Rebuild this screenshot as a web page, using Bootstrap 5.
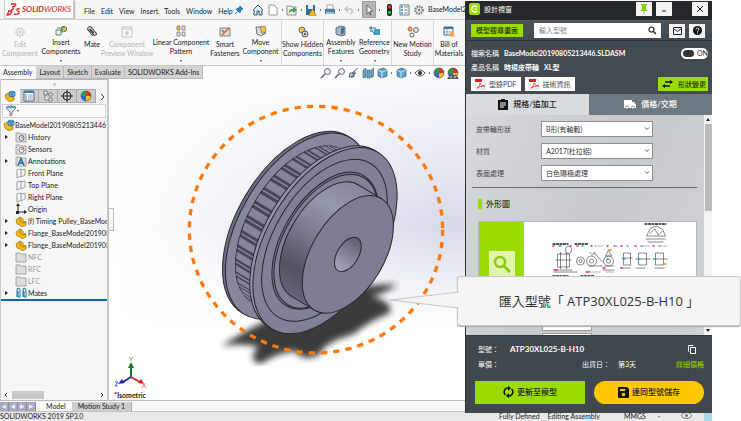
<!DOCTYPE html>
<html lang="zh-Hant">
<head>
<meta charset="utf-8">
<meta name="viewport" content="width=device-width, initial-scale=1">
<title>SOLIDWORKS</title>
<link href="https://cdn.jsdelivr.net/npm/bootstrap@5.3.0/dist/css/bootstrap.min.css" rel="stylesheet">
<style>
body{font-family:Lato,"Noto Sans CJK TC",sans-serif;font-size:7px;line-height:9px;color:#222;background:#fff}
button{font:inherit;color:inherit;background:none;border:0;padding:0}
svg{display:block;flex:none}
.ic{width:12px;height:12px}
.mid{display:grid;place-items:center}
.desk{min-height:100vh;padding-right:29px}
.cad{min-height:100vh;background:#f4f4f4}
.titles{height:20px;border-bottom:1px solid #cfcfcf;background:#f5f5f5}
.brand{width:70px;height:19px;margin-left:4px;background:#fbfbfb;border:1px solid #ccc;border-top:0;box-shadow:1px 1px 1px #bbb}
.brand b{color:#d4282a;font-style:italic;font-size:8px;line-height:18px}
.brand b i{font-weight:400}
.menus{gap:6px;margin-left:10px;padding-top:4px;width:145px}
.quick{gap:3px}
.quick button.on{background:#b5b5b5;border:1px solid #999;height:17px;width:14px}
.ribbon{height:46px;border-bottom:1px solid #c6c6c6;background:#f8f8f8;overflow:hidden}
.ribbon button{flex:none;display:flex;flex-direction:column;align-items:center;padding-top:5px;white-space:nowrap}
.ribbon button .ic{margin-bottom:1px}
.ribbon button.two{padding-top:6px}
.ribbon button.two .ic{margin-bottom:2px}
.ribbon .rule{border-right:1px solid #d8d8d8}
.ribbon .off{color:#b4b4b4}
.ribbon .off .ic{opacity:.35}
.caret{width:0;height:0;border:1px solid transparent;border-top:2px solid #444;margin-top:4px}
.dot{width:1px;height:2px;background:#777}
.views .dot{margin:0 1px}
.w20{width:20px}.w30{width:30px}.w34{width:34px}.w40{width:40px}.w42{width:42px}.w50{width:50px}.w58{width:58px}
.cmd button{height:13px;padding:0 3px;background:#d3d3d3;border:1px solid #b8b8b8;border-width:0 1px 1px 0}
.cmd button.on{background:#f8f8f8;border-color:transparent}
.work{background:linear-gradient(90deg,#fff 16%,rgba(255,255,255,0) 62%),linear-gradient(#fdfdff 0%,#eceef6 22%,#d8dbe8 48%,#edeff6 64%,#fff 78%)}
.tree{width:109px;background:#f6f6f6;border:1px solid #c9c9c9;border-width:0 2px 0 1px;overflow:hidden}
.grip{height:10px;border-top:1px solid #b5b5b5}
.grip i{width:3px;height:3px;border:1px solid #aaa;border-radius:50%}
.ftabs button{width:19px;height:14px;background:#ccc;border:1px solid #aaa;border-width:1px 1px 1px 0}
.ftabs button.on{background:#f8f8f8;border-color:transparent}
.filter{height:14px;margin:1px;border:1px solid #d2d2d2;background:#fafafa;padding-left:2px}
.tree li{height:12px;gap:1px;white-space:nowrap}
.tree .top-node{gap:0;padding-left:2px}
.tree .nodes li{padding-left:4px}
.tree .arr{width:9px;flex:none}
.arr.more::before{content:"";display:block;width:0;border:2px solid transparent;border-left:3px solid #222}
.tree .none{color:#999}
.rollbar{border-top:2px solid #1461b3}
.hs{height:11px;padding:0 3px}
.hs i{width:32px;height:8px;background:#cacaca;margin-left:4px}
.pull{left:108px;top:142px;width:6px;height:23px;border:1px solid #bbb;background:#f8f8f8}
.views{height:13px;left:320px;gap:2px}
.model{width:270px;margin-left:71px;margin-top:17px}
.triad{left:5px;bottom:0}
.foot{border-top:1px solid #bbb;height:11px;background:#f7f7f7}
.foot .step{width:9px;height:9px;background:#a8a9c2;border-right:1px solid #8888a4;color:#eee;font-size:5px}
.foot button{padding:0 6px}
.foot .alt{background:#cfcfcf;border-right:1px solid #aaa}
.status{height:10px;background:#e9e9e9;border-top:1px solid #c2c2c2;white-space:nowrap}
.status .right{width:213px}
.tail{width:8px;background:#a8dbe6}
.win{right:29px;top:1px;bottom:8px;width:247px;background:#434a50;color:#fff;border-left:1px solid #2b2f33}
.win .cap{height:21px;background:#25292c;border-bottom:1px solid #555b60;padding:0 4px 2px 3px;gap:4px}
.cap button,.sq{background:#f4f4f4;color:#222;width:16px;height:14px}
.search{height:22px;padding:0 7px 0 5px;background:linear-gradient(#4b5258,#434a50);border-bottom:1px solid #2f3438}
.lime{background:#9bdc00;color:#26330a;font-weight:500}
.search .lime{width:52px;height:13px}
.find{height:15px;background:#fff;margin:0 8px 0 11px}
.find input{font-size:7px;line-height:9px;border:0;padding:0 5px;min-width:0;background:none;color:#333;outline:0}
.find input::placeholder{color:#888}
.info{padding:5px 4px 3px 5px}
.info .line{height:14px;gap:5px;white-space:nowrap}
.info .chips{margin-top:3px}
.tog{flex:none;width:27px;height:11px;border-radius:6px;background:#fff;color:#333}
.tog input{appearance:none;flex:none;margin:0 3px 0 2px;width:11px;height:7px;border-radius:4px;background:#333}
.chip{height:14px;background:#fff;color:#444;padding:0 4px 0 3px;gap:3px}
.chip.lime{background:#9bdc00;color:#26330a;gap:5px;padding:0 2px 0 4px}
.tabs2 button{height:21px;font-size:8px;gap:5px;font-weight:500}
.tabs2 .on{background:#d9dcde;color:#222}
.tabs2 .no{background:#6d7881;color:#fff}
.form2{background:linear-gradient(115deg,#d6d9db,#c6cacd 50%,#d0d3d5);color:#444;overflow:hidden;min-height:0}
.form2 .in{padding:6px 7px 0 6px}
.frow{height:22px;align-items:flex-start;padding-left:4px}
.frow label{width:65px;line-height:16px}
.frow select{width:112px;height:16px;border:1px solid #8b8f92;background:#fff;font-size:7px;line-height:9px;color:#333;appearance:none;padding:0 4px;border-radius:0}
.pick{position:relative}
.pick svg{position:absolute;right:3px;top:6px;pointer-events:none}
.sect{border-top:1px solid #666b6f;padding:11px 0 0 6px}
.sect h2{font-size:8px;line-height:10px;font-weight:500;margin:0 0 12px;padding-left:4px;border-left:4px solid #9bdc00;color:#333}
.shot{height:86px;background:#fff;border:1px solid #b5b8ba}
.shot .side{width:45px;background:#9bdc00}
.shot .lens{width:26px;height:26px;background:#e2f5b0}
.boxes{margin:8px 0 0 64px;width:50px}
.boxes input{display:block;width:100%;height:16px;margin-bottom:2px;border:1px solid #999;background:#fff}
.sb{width:8px;background:#f2f2f2;color:#222;padding:3px 0}
.sb i{background:#b9bbbd;width:7px;height:87px;margin-top:3px}
.base{height:78px;padding:6px 8px 9px 12px;border-top:1px solid #33383c;background:#41484d}
.base .line{height:15px;white-space:nowrap}
.base .k{width:32px}
.base .code{font-size:8px}
.base .day{margin-right:40px}
.base a{color:#9bdc00;text-decoration:none}
.base .acts{margin:9px 0 0 -3px;gap:9px}
.acts button{height:23px;font-size:8px;color:#222;font-weight:500;gap:3px}
.acts .save{background:#ffc800;border-radius:12px}
.tip{right:0;top:276px;width:284px;height:50px;background:#f5f5f5;border:1px solid #c6c6c6;border-radius:3px;font-family:"Open Sans","Noto Sans CJK TC",sans-serif;font-size:13px;line-height:18px;color:#333;box-shadow:0 1px 1px #aaa}
.tip svg{position:absolute;right:100%;top:14px;margin-right:-1px}
</style>
<script src="https://cdn.jsdelivr.net/npm/bootstrap@5.3.0/dist/js/bootstrap.bundle.min.js"></script>
</head>
<body>
<svg width="0" height="0" class="position-absolute" aria-hidden="true">
<symbol id="part" viewBox="0 0 12 12"><path d="M1 5l4-3 3 2v2l3 1v3l-4 2-2-2-3-1z" fill="#f2b90f" stroke="#8a6200" stroke-width=".6"/><path d="M5 2v4l3 2 3-1" fill="none" stroke="#8a6200" stroke-width=".6"/></symbol>
<symbol id="asm" viewBox="0 0 12 12"><path d="M1 5l3-2 3 3 3 1v3l-4 2-4-3z" fill="#f2b90f" stroke="#8a6200" stroke-width=".6"/><path d="M5 2l3-1 3 1v4L8 7 5 6z" fill="#5aa9d8" stroke="#205a80" stroke-width=".6"/><path d="M5 2l3 1 3-1M8 3v4" fill="none" stroke="#205a80" stroke-width=".5"/></symbol>
<symbol id="fold" viewBox="0 0 12 12"><path d="M1 2h4l1 1h5v8H1z" fill="#ddd" stroke="#888" stroke-width=".7"/></symbol>
<symbol id="ball" viewBox="0 0 12 12"><circle cx="6" cy="6" r="5" fill="#2c65cc"/><path d="M6 6V1a5 5 0 00-5 5z" fill="#2ca13a"/><path d="M6 6V1a5 5 0 015 5z" fill="#e6322b"/><path d="M6 6h5a5 5 0 01-5 5z" fill="#f0c322"/><circle cx="6" cy="6" r="5" fill="none" stroke="#444" stroke-width=".5"/></symbol>
<symbol id="cube" viewBox="0 0 12 12"><path d="M2 3l5-2 4 2v6l-5 2-4-2z" fill="#5aa5c8" stroke="#356" stroke-width=".7"/><path d="M2 3l4 2 5-2M6 5v6" fill="none" stroke="#e8f6fc" stroke-width=".8"/></symbol>
<symbol id="lens" viewBox="0 0 12 12"><circle cx="7.500" cy="4.500" r="3" fill="#e5f2f8" stroke="#667" stroke-width="1"/><path d="M5 7l-4 4" stroke="#667" stroke-width="1.600"/></symbol>
<symbol id="plane" viewBox="0 0 12 12"><path d="M2 3l4-1v7l-4 2zM6 3l4-1v6l-4 2" fill="none" stroke="#888" stroke-width=".8"/></symbol>
<symbol id="gear" viewBox="0 0 12 12"><circle cx="6" cy="6" r="4" fill="none" stroke="#777" stroke-width="1.600" stroke-dasharray="1.600 1"/><circle cx="6" cy="6" r="3" fill="#eee" stroke="#777" stroke-width=".6"/><circle cx="6" cy="6" r="1.200" fill="#777"/></symbol>
<symbol id="pdf" viewBox="0 0 12 12"><path d="M2 1h7l2 2v8H2z" fill="#fff" stroke="#bbb" stroke-width=".6"/><path d="M1 1h7v3H1z" fill="#dc2020"/><path d="M3 10c2-1 3-3 3-5 1 2 2 3 5 3-4 0-6 1-8 2z" fill="none" stroke="#dc2020" stroke-width=".8"/></symbol>
</svg>

<div class="desk position-relative">
<main class="cad d-flex flex-column">
<header class="titles d-flex align-items-center overflow-hidden">
  <div class="brand d-flex align-items-center flex-shrink-0">
    <svg width="17" height="16" viewBox="0 0 17 16" fill="none" stroke="#d4282a" stroke-width="1.300"><path d="M6 3h4c2 0 0 3-3 3 3 0 1 3-1 3M3 10h3c2 0 0 4-4 4l2-4M15 8c-3-1-4 1-2 2 3 2 0 4-4 3"/></svg>
    <b>SOLID<i>WORKS</i></b>
  </div>
  <nav class="menus d-flex flex-shrink-0"><button>File</button><button>Edit</button><button>View</button><button>Insert</button><button>Tools</button><button>Window</button><button>Help</button></nav>
  <div class="quick d-flex align-items-center flex-shrink-0">
    <button class="ms-1" aria-label="Pin"><svg class="ic" viewBox="0 0 12 12"><path d="M7 2l3 3-2 1-1 3-4-4 3-1zM5 7l-3 3" fill="#2a84bb" stroke="#2a84bb"/></svg></button>
    <button aria-label="Home" class="ms-1"><svg class="ic" viewBox="0 0 12 12"><path d="M1 6l5-5 5 5M2 6v5h3V7h2v4h3V6" fill="#dfe8ee" stroke="#345468"/></svg></button>
    <button aria-label="New"><svg class="ic" viewBox="0 0 12 12"><path d="M2 1h5l3 3v7H2z" fill="#fff" stroke="#999"/></svg></button><i class="dot"></i>
    <button aria-label="Open"><svg class="ic" viewBox="0 0 12 12"><path d="M1 2h4l1 1h4v8H1z" fill="#eee" stroke="#666" stroke-width=".7"/><path d="M3 9c0-4 2-4 4-4V3l4 3-4 3V7C5 7 4 8 3 9" fill="#39a848"/></svg></button><i class="dot"></i>
    <button aria-label="Save"><svg class="ic" viewBox="0 0 12 12"><path d="M1 1h9v10H1z" fill="#2f6f9d"/><path d="M3 1h5v4H3z" fill="#e5eef4"/><path d="M7.500 5l4 6.500h-8z" fill="#f6b914" stroke="#8a6200" stroke-width=".4"/></svg></button><i class="dot"></i>
    <button aria-label="Print"><svg class="ic" viewBox="0 0 12 12"><path d="M3 1h6v4H3z" fill="#fff" stroke="#888" stroke-width=".7"/><path d="M1 5h10v5H1z" fill="#4a84a7"/><path d="M2 9h8" stroke="#fff"/></svg></button><i class="dot"></i>
    <button aria-label="Undo"><svg class="ic" viewBox="0 0 12 12"><path d="M5 2L2 5l3 3M2 5h5c3 0 3 4 0 5" fill="none" stroke="#c5c5c5" stroke-width="1.500"/></svg></button><i class="dot"></i>
    <button class="on" aria-label="Select"><svg class="ic" viewBox="0 0 12 12"><path d="M4 1v9l2-2 1 3h1L7 7h3z" fill="#eee" stroke="#444" stroke-width=".7"/></svg></button><i class="dot"></i>
    <button aria-label="Rebuild"><svg class="ic" viewBox="0 0 12 12"><rect x="4" y="0" width="5" height="12" rx="2" fill="#222"/><circle cx="6.500" cy="3" r="1.700" fill="#e33"/><circle cx="6.500" cy="8.500" r="1.700" fill="#2b4"/></svg></button>
    <button aria-label="Properties"><svg class="ic" viewBox="0 0 12 12"><path d="M2 1h9v10H2z" fill="#fff" stroke="#678"/><path d="M3 3h2M3 6h2M3 9h2" stroke="#2a84bb" stroke-width="1.500"/><path d="M6 3h4M6 6h4M6 9h4" stroke="#888"/></svg></button>
    <button aria-label="Options"><svg class="ic"><use href="#gear"/></svg></button>
    <span>BaseModel2</span>
  </div>
</header>

<div class="ribbon d-flex">
  <button class="two off w40" disabled><svg class="ic"><use href="#gear"/></svg>Edit<span>Component</span></button>
  <button class="w42"><svg class="ic" viewBox="0 0 12 12"><path d="M1 5h5v5H1zM2 3h5v5" fill="#e9f2e8" stroke="#3a7a3a" stroke-width=".8"/><circle cx="9" cy="4" r="3" fill="#2f74b8"/><path d="M7 3l4-1v3l-3 2z" fill="#f2b90f"/></svg>Insert<span>Components</span><i class="caret"></i></button>
  <button class="two w20"><svg class="ic" viewBox="0 0 12 12"><path d="M3 3l5 6c2 1 3-1 2-2L5 1C3 0 1 2 2 4l5 6M4 3l4 4" fill="none" stroke="#444" stroke-width="1.100"/></svg>Mate</button>
  <button class="two off w50" disabled><svg class="ic" viewBox="0 0 12 12"><path d="M1 1h10v10H1zM1 3h10" fill="none" stroke="#666"/><circle cx="6" cy="7" r="2" fill="#888"/></svg>Component<span>Preview Window</span></button>
  <button class="w58"><svg class="ic" viewBox="0 0 12 12"><path d="M2 1h3v4H2z" fill="#f2b90f" stroke="#765" stroke-width=".6"/><path d="M7 1h3v4H7zM2 7h3v4H2zM7 7h3v4H7z" fill="#e8e8e8" stroke="#667" stroke-width=".7"/></svg>Linear Component<span>Pattern</span><i class="caret"></i></button>
  <button class="two w30"><svg class="ic" viewBox="0 0 12 12"><path d="M1 2h10v8H1z" fill="#ddd" stroke="#666" stroke-width=".8"/><path d="M3 9l4-4M7 5l3-3M3 4l2 2" stroke="#c66a20" stroke-width="1.500"/></svg>Smart<span>Fasteners</span></button>
  <button class="w42 rule"><svg class="ic" viewBox="0 0 12 12"><path d="M1 2h6v5l4 1-5 3-4-2z" fill="#ddd" stroke="#555" stroke-width=".8"/><path d="M5 2l5-1 1 5-4 3z" fill="#f2c23b" stroke="#755" stroke-width=".6"/></svg>Move<span>Component</span><i class="caret"></i></button>
  <button class="two w42 rule"><svg class="ic" viewBox="0 0 12 12"><circle cx="5" cy="4" r="3" fill="#f2c23b" stroke="#555" stroke-width=".8"/><circle cx="8" cy="8" r="3" fill="#ddd" stroke="#444" stroke-width=".9"/><circle cx="8" cy="8" r="1" fill="#333"/></svg>Show Hidden<span>Components</span></button>
  <button class="w34"><svg class="ic" viewBox="0 0 12 12"><path d="M1 3l4-2 5 1v8l-4 1-5-2z" fill="#aab5bd" stroke="#445" stroke-width=".7"/><path d="M6 3l3-1v6l-3 2z" fill="#267fb0"/></svg>Assembly<span>Features</span><i class="caret"></i></button>
  <button class="w34 rule"><svg class="ic" viewBox="0 0 12 12"><path d="M5 4h6v6H5z" fill="#4a9ec4"/><path d="M2 1v6M0 3h7M3 5l3 5" stroke="#256d94"/></svg>Reference<span>Geometry</span><i class="caret"></i></button>
  <button class="two w42 rule"><svg class="ic" viewBox="0 0 12 12"><circle cx="3" cy="3" r="2" fill="#f6a26d" stroke="#b64"/><circle cx="9" cy="4" r="2.500" fill="#ddd" stroke="#777"/><circle cx="5" cy="9" r="2" fill="#eee" stroke="#666"/></svg>New Motion<span>Study</span></button>
  <button class="two w30"><svg class="ic" viewBox="0 0 12 12"><path d="M1 1h9v8H1z" fill="#fff" stroke="#37799f"/><path d="M1 2h9" stroke="#37799f" stroke-width="2"/><path d="M1 6h9M4 3v6" stroke="#789" stroke-width=".7"/><path d="M6 7l4-1 2 4-4 1z" fill="#f2a93b"/></svg>Bill of<span>Materials</span></button>
</div>

<div class="work flex-grow-1 d-flex flex-column position-relative">
  <nav class="cmd d-flex"><button class="on">Assembly</button><button>Layout</button><button>Sketch</button><button>Evaluate</button><button>SOLIDWORKS Add-Ins</button></nav>
  <div class="views position-absolute top-0 d-flex align-items-center">
    <svg class="ic"><use href="#lens"/></svg><svg class="ic"><use href="#lens"/></svg>
    <svg class="ic" viewBox="0 0 12 12"><path d="M10 1L4 6h4L3 10M2 6h4v4H1z" fill="#b9cdd8" stroke="#567" stroke-width="1"/></svg>
    <svg class="ic" viewBox="0 0 12 12"><path d="M1 3l3-2v9l-3 1zM5 3h3v8H5zM9 3l3-2v8l-3 2z" fill="#66a9c6" stroke="#356" stroke-width=".6"/></svg>
    <svg class="ic"><use href="#cube"/></svg><i class="dot"></i><svg class="ic"><use href="#cube"/></svg><i class="dot"></i>
    <svg class="ic" viewBox="0 0 12 12"><path d="M1 6c3-4 7-4 10 0-3 4-7 4-10 0z" fill="#eee" stroke="#555"/><circle cx="6" cy="6" r="2" fill="#333"/></svg><i class="dot"></i>
    <svg class="ic"><use href="#ball"/></svg><svg class="ic" viewBox="0 0 12 12"><use href="#ball"/><path d="M0 12l3-4h6l3 4z" fill="#555"/><path d="M3 10h2M7 10h2" stroke="#fff"/></svg>
  </div>
  <div class="d-flex flex-grow-1">
    <aside class="tree d-flex flex-column flex-shrink-0">
      <div class="grip mid"><i></i></div>
      <div class="ftabs d-flex">
        <button class="on mid" aria-label="Feature tree"><svg class="ic"><use href="#asm"/></svg></button>
        <button class="mid" aria-label="Properties"><svg class="ic" viewBox="0 0 12 12"><path d="M1 1h10v10H1z" fill="#fff" stroke="#567"/><path d="M1 2h10" stroke="#2a84bb" stroke-width="2"/><path d="M3 4v6" stroke="#2a84bb"/><path d="M5 5h5M5 7h5M5 9h5" stroke="#888" stroke-width=".8"/></svg></button>
        <button class="mid" aria-label="Configurations"><svg class="ic" viewBox="0 0 12 12"><path d="M2 1h3v4H2zM7 3h3v3H7zM7 8h3v3H7zM3 5v5h4M5 4h2" fill="#eee" stroke="#666" stroke-width=".8"/></svg></button>
        <button class="mid" aria-label="Dimensions"><svg class="ic" viewBox="0 0 12 12"><circle cx="6" cy="6" r="4" fill="none" stroke="#222"/><path d="M6 0v12M0 6h12" stroke="#222"/></svg></button>
        <button class="mid" aria-label="Appearances"><svg class="ic"><use href="#ball"/></svg></button>
        <svg class="ms-1 mt-1" width="6" height="8" viewBox="0 0 6 8"><path d="M1 1l3 3-3 3" fill="none" stroke="#444"/></svg>
      </div>
      <div class="filter d-flex align-items-center"><svg class="ic" viewBox="0 0 12 12"><ellipse cx="6" cy="2.500" rx="5" ry="1.500" fill="#4fa4cc" stroke="#567" stroke-width=".6"/><path d="M1 3l4 4v4l2-1V7l4-4" fill="#ddd" stroke="#667" stroke-width=".8"/></svg><i class="caret mt-0"></i></div>
      <ul class="list-unstyled m-0">
        <li class="top-node d-flex align-items-center"><svg class="ic"><use href="#asm"/></svg><span>BaseModel20190805213446&nbsp; (D</span></li>
      </ul>
      <ul class="nodes list-unstyled m-0">
        <li class="d-flex align-items-center"><span class="arr more"></span><svg class="ic" viewBox="0 0 12 12"><use href="#fold"/><circle cx="6.500" cy="7" r="2.500" fill="#fff" stroke="#357" stroke-width=".9"/><path d="M6.500 5.500V7H8" fill="none" stroke="#357" stroke-width=".7"/></svg>History</li>
        <li class="d-flex align-items-center"><span class="arr"></span><svg class="ic" viewBox="0 0 12 12"><use href="#fold"/><circle cx="6.500" cy="7" r="2.500" fill="#fff" stroke="#555" stroke-width=".7"/><path d="M6 7l3-2" stroke="#d22"/></svg>Sensors</li>
        <li class="d-flex align-items-center"><span class="arr more"></span><svg class="ic" viewBox="0 0 12 12"><use href="#fold"/><path d="M3 10.500l3-7 3 7M4 8h4" fill="none" stroke="#14679c" stroke-width="1.400"/></svg>Annotations</li>
        <li class="d-flex align-items-center"><span class="arr"></span><svg class="ic"><use href="#plane"/></svg>Front Plane</li>
        <li class="d-flex align-items-center"><span class="arr"></span><svg class="ic"><use href="#plane"/></svg>Top Plane</li>
        <li class="d-flex align-items-center"><span class="arr"></span><svg class="ic"><use href="#plane"/></svg>Right Plane</li>
        <li class="d-flex align-items-center"><span class="arr"></span><svg class="ic" viewBox="0 0 12 12"><path d="M3 2v7h7" fill="none" stroke="#222"/><path d="M3 0l2 3H1zM12 9L9 7v4zM1 8h3v3H1z" fill="#222"/></svg>Origin</li>
        <li class="d-flex align-items-center"><span class="arr more"></span><svg class="ic"><use href="#part"/></svg>(f) Timing Pulley_BaseMode</li>
        <li class="d-flex align-items-center"><span class="arr more"></span><svg class="ic"><use href="#part"/></svg>Flange_BaseModel201908</li>
        <li class="d-flex align-items-center"><span class="arr more"></span><svg class="ic"><use href="#part"/></svg>Flange_BaseModel201908</li>
        <li class="d-flex align-items-center none"><span class="arr"></span><svg class="ic"><use href="#fold"/></svg>NFC</li>
        <li class="d-flex align-items-center none"><span class="arr"></span><svg class="ic"><use href="#fold"/></svg>RFC</li>
        <li class="d-flex align-items-center none"><span class="arr"></span><svg class="ic"><use href="#fold"/></svg>LFC</li>
        <li class="d-flex align-items-center"><span class="arr more"></span><svg class="ic" viewBox="0 0 12 12"><path d="M2 10V4c0-4 3-3 3 0v5c0 2-2 1-2 0V4M8 10V4c0-4 3-3 3 0v5c0 2-2 1-2 0V4" fill="none" stroke="#2f85ab" stroke-width="1.200"/></svg>Mates</li>
      </ul>
      <div class="rollbar"></div>
      <div class="hs d-flex align-items-center mt-auto"><svg width="4" height="6" viewBox="0 0 4 6"><path d="M3 1L1 3l2 2" fill="none" stroke="#333"/></svg><i></i><svg class="ms-auto" width="4" height="6" viewBox="0 0 4 6"><path d="M1 1l2 2-2 2" fill="none" stroke="#333"/></svg></div>
    </aside>
    <section class="flex-grow-1 position-relative">
      <svg class="model" viewBox="0 0 810 810" role="img" aria-label="Timing pulley">
        <defs>
          <linearGradient id="hubg" gradientUnits="userSpaceOnUse" x1="0" y1="-195" x2="0" y2="195"><stop offset="0" stop-color="#85889d"/><stop offset=".25" stop-color="#9497b0"/><stop offset=".5" stop-color="#7a7c92"/><stop offset=".8" stop-color="#51535f"/><stop offset="1" stop-color="#64667a"/></linearGradient>
          <linearGradient id="boreg" x1="0" y1="0" x2="0" y2="1"><stop offset="0" stop-color="#5c5e6c"/><stop offset="1" stop-color="#a5a8c2"/></linearGradient>
          <filter id="soft" x="-20%" y="-20%" width="140%" height="140%"><feGaussianBlur stdDeviation="9"/></filter>
        </defs>
        <path d="M125 750Q280 650 420 610Q540 560 650 566Q620 590 575 600Q640 620 630 650Q560 680 520 715Q430 740 420 775Q370 800 345 765Q290 770 240 805Q200 790 235 752Q180 740 125 750z" fill="#1b1b1b" opacity=".86" filter="url(#soft)"/>
        <g stroke="#25272f" stroke-width="3">
          <g transform="translate(344 385) rotate(31)">
            <ellipse rx="171" ry="309" fill="#6c6e82"/>
            <ellipse cx="10" rx="171" ry="309" fill="#85889d"/>
            <path d="M10-266A147 266 0 0 0 10 266H100V-266z" fill="#474957"/>
            <g id="teeth" stroke-width="1"></g>
          </g>
          <g transform="translate(435 434) rotate(31)">
            <ellipse cx="-11" rx="171" ry="309" fill="#9194aa"/>
            <ellipse rx="171" ry="309" fill="#7f8297"/>
            <ellipse cx="-2" rx="149" ry="269" fill="#7f8297"/>
            <ellipse rx="126" ry="227" fill="#75778b"/>
            <ellipse cx="3" rx="123" ry="222" fill="#7f8297"/>
            <path d="M0-195A108 195 0 0 0 0 195H80V-195z" fill="url(#hubg)"/>
            <ellipse cx="80" rx="108" ry="195" fill="#7c7f93"/>
            <ellipse cx="80" rx="32" ry="57" fill="url(#boreg)"/>
          </g>
        </g>
        <ellipse cx="408" cy="401" rx="380" ry="370" fill="none" stroke="#ff7a0d" stroke-width="10" stroke-dasharray="19 18"/>
      </svg>
      <div class="triad position-absolute">
        <svg width="32" height="34" viewBox="0 0 32 34"><path d="M17 20V9" stroke="#1a7a1a" stroke-width="2"/><path d="M17 5l3 6h-6z" fill="#1a7a1a"/><path d="M17 20l9 5" stroke="#c22" stroke-width="2"/><path d="M30 27l-6-1 3-4z" fill="#c22"/><path d="M17 20l-8 5" stroke="#22b" stroke-width="2"/><path d="M4 27l4-5 3 4z" fill="#22b"/><path d="M15 0l2 2 2-2M17 2v2" fill="none" stroke="#5b5"/><path d="M28 26l4 5M32 26l-4 5" stroke="#e66"/><path d="M1 25h3l-3 4h3" fill="none" stroke="#55d"/></svg>
        <b>*Isometric</b>
      </div>
    </section>
  </div>
  <button class="pull position-absolute" aria-label="Collapse tree"></button>
</div>
<footer>
  <div class="foot d-flex align-items-center"><span class="step text-center">◀</span><span class="step text-center">◀</span><span class="step text-center">▶</span><span class="step text-center">▶</span><button class="bg-white ms-1">Model</button><button class="alt">Motion Study 1</button></div>
  <div class="status d-flex justify-content-between"><span>SOLIDWORKS 2019 SP3.0</span><div class="right d-flex gap-2"><span>Fully Defined</span><span>Editing Assembly</span><span class="ms-3">MMGS</span><span class="ms-1">·</span><svg class="ms-auto" width="11" height="8" viewBox="0 0 11 8"><ellipse cx="5.500" cy="3.500" rx="5" ry="3" fill="none" stroke="#777"/><circle cx="5.500" cy="3.500" r="1.500" fill="#777"/></svg><i class="tail ms-1"></i></div></div>
</footer>
</main>

<section class="win position-absolute d-flex flex-column">
  <div class="cap d-flex align-items-center">
    <svg width="11" height="12" viewBox="0 0 11 12"><rect width="11" height="12" rx="2" fill="#9bdc00"/><path d="M8 4a3 3 0 100 4" fill="none" stroke="#fff" stroke-width="1.500"/><path d="M5 6h3" stroke="#fff"/></svg>
    <span class="me-auto">設計視窗</span>
    <button class="mid" aria-label="固定"><svg width="8" height="10" viewBox="0 0 8 10"><path d="M1 0h6v1L6 2v3l2 2H0l2-2V2L1 1zM3.500 7h1v3h-1z" fill="#8ad000"/></svg></button>
    <button class="mid" aria-label="最小化"><svg width="6" height="8" viewBox="0 0 6 8"><path d="M1 6h4" stroke="#222"/></svg></button>
    <button aria-label="關閉" class="mid ms-3"><svg width="8" height="8" viewBox="0 0 8 8"><path d="M1 1l6 6M7 1L1 7" stroke="#222"/></svg></button>
  </div>
  <div class="search d-flex align-items-center">
    <button class="lime">模型搜尋畫面</button>
    <div class="find flex-grow-1 d-flex align-items-center"><input class="flex-grow-1" type="text" placeholder="輸入型號" aria-label="輸入型號"><svg class="me-1" width="9" height="9" viewBox="0 0 9 9"><circle cx="3.500" cy="3.500" r="2.500" fill="none" stroke="#222" stroke-width="1.200"/><path d="M5.500 5.500L8 8" stroke="#222" stroke-width="1.500"/></svg></div>
    <button class="sq mid me-1" aria-label="郵件"><svg width="9" height="8" viewBox="0 0 9 8"><path d="M.5.500h8v7h-8zM.5 1.500l4 3 4-3" fill="none" stroke="#222"/></svg></button>
    <button class="sq mid" aria-label="說明"><svg width="9" height="9" viewBox="0 0 9 9"><circle cx="4.500" cy="4.500" r="4.500" fill="#111"/><path d="M3 3.500c0-2 3-2 3 0 0 1-1.500 1-1.500 2.200M4.500 6.500v1" fill="none" stroke="#fff"/></svg></button>
  </div>
  <div class="info">
    <div class="line d-flex align-items-center"><span>檔案名稱</span><b class="me-auto">BaseModel20190805213446.SLDASM</b><label class="tog d-flex align-items-center"><input type="checkbox" checked>ON</label></div>
    <div class="line d-flex align-items-center"><span>產品名稱</span><b>時規皮帶輪&nbsp;&nbsp; XL型</b></div>
    <div class="chips d-flex align-items-center">
      <button class="chip d-flex align-items-center"><svg class="ic"><use href="#pdf"/></svg>型錄PDF</button>
      <button class="chip d-flex align-items-center ms-1"><svg class="ic"><use href="#pdf"/></svg>技術資訊</button>
      <button class="chip lime d-flex align-items-center ms-auto"><svg width="11" height="8" viewBox="0 0 11 8"><path d="M3 2h6M2 6h6" stroke="#111" stroke-width="1.400"/><path d="M8 0l3 2-3 2zM3 4L0 6l3 2z" fill="#111"/></svg>形狀變更</button>
    </div>
  </div>
  <div class="tabs2 d-flex">
    <button class="on w-50 d-flex align-items-center justify-content-center"><svg width="10" height="11" viewBox="0 0 10 11"><path d="M0 1h3a2 2 0 014 0h3v10H0z" fill="#111"/><path d="M2 4h6M2 6h6M2 8h4" stroke="#fff"/></svg>規格/追加工</button>
    <button class="no w-50 d-flex align-items-center justify-content-center"><svg width="12" height="9" viewBox="0 0 12 9"><path d="M0 0h8v2h2l2 3v3H0z" fill="#fff"/><circle cx="3" cy="7.500" r="1.500" fill="#fff" stroke="#6d7881" stroke-width=".8"/><circle cx="9" cy="7.500" r="1.500" fill="#fff" stroke="#6d7881" stroke-width=".8"/></svg>價格/交期</button>
  </div>
  <div class="form2 d-flex flex-grow-1">
    <div class="in flex-grow-1">
      <div class="frow d-flex"><label for="s1">皮帶輪形狀</label><div class="pick"><select id="s1"><option>B形(有軸轂)</option></select><svg width="6" height="4" viewBox="0 0 6 4"><path d="M1 .5l2 2 2-2" fill="none" stroke="#555"/></svg></div></div>
      <div class="frow d-flex"><label for="s2">材質</label><div class="pick"><select id="s2"><option>A2017(杜拉鋁)</option></select><svg width="6" height="4" viewBox="0 0 6 4"><path d="M1 .5l2 2 2-2" fill="none" stroke="#555"/></svg></div></div>
      <div class="frow d-flex"><label for="s3">表面處理</label><div class="pick"><select id="s3"><option>白色陽極處理</option></select><svg width="6" height="4" viewBox="0 0 6 4"><path d="M1 .5l2 2 2-2" fill="none" stroke="#555"/></svg></div></div>
      <div class="sect">
        <h2>外形圖</h2>
        <div class="shot d-flex">
          <div class="side mid"><div class="lens mid"><svg width="18" height="18" viewBox="0 0 18 18"><circle cx="7" cy="7" r="5" fill="none" stroke="#8ccb00" stroke-width="2.500"/><path d="M11 11l6 6" stroke="#8ccb00" stroke-width="3"/></svg></div></div>
          <svg class="flex-grow-1" height="84" viewBox="0 0 167 84" fill="none" stroke="#555" stroke-width=".7">
            <path d="M118 2h22M26 22h16M48 22h14M26 54h16M54 54h14" stroke="#222" stroke-width="1.500" stroke-dasharray="3 .5"/>
            <path d="M120 14l4-8 6-2 6 3 3 7zM123 12l5-5 4 6 4-4M119 17h20M121 20h16M31 32h12v13H31zM34 30v17M40 30v17M29 38h16"/>
            <circle cx="54" cy="39" r="4"/><circle cx="54" cy="39" r="1.500"/><circle cx="65" cy="39" r="5"/><circle cx="65" cy="39" r="2"/><path d="M63 30l3 3 3-3M67 30l9 10M62 44h14"/><circle cx="82" cy="39" r="5"/><circle cx="82" cy="39" r="2"/><path d="M82 28l-3 6h6zM78 44h10M97 31h7v12h-7zM95 36h11M112 31h8v12h-8zM109 37h15M129 31h8v12h-8zM126 37h15M39 28c0-5 6-5 6 0s-6 5-6 0M27 50h24M30 48h16M76 48h12M94 46h10M109 46h10M128 46h10"/>
            <path d="M26 24h2M43 24h2M50 24h2M64 24h2M80 24h2M94 24h2M108 24h2M126 24h2M27 48h4M59 50h4M76 46h3M94 46h2" stroke="#e21a91" stroke-width="1.600"/>
            <path d="M32 24h3M55 24h2M87 24h2M100 24h2M114 24h2M96 37h3M111 37h3M127 37h3M80 37h2" stroke="#18aed2" stroke-width="1.500"/>
            <path d="M82 28h3M132 24h2M137 42h3" stroke="#f68a1f" stroke-width="1.500"/>
            <path d="M68 24h8M89 24h3M116 24h7M134 24h7M63 50h12M79 50h9" stroke="#666" stroke-dasharray="2 1"/>
          </svg>
        </div>
        <div class="boxes"><input type="text" aria-label="尺寸一"><input type="text" aria-label="尺寸二"></div>
      </div>
    </div>
    <div class="sb d-flex flex-column align-items-center"><svg width="4" height="3" viewBox="0 0 4 3"><path d="M0 3l2-3 2 3z" fill="#222"/></svg><i></i><svg class="mt-auto" width="4" height="3" viewBox="0 0 4 3"><path d="M0 0h4L2 3z" fill="#222"/></svg></div>
  </div>
  <div class="base">
    <div class="line d-flex align-items-center"><span class="k">型號：</span><b class="code">ATP30XL025-B-H10</b><svg class="ms-auto me-2" width="8" height="9" viewBox="0 0 8 9"><path d="M.5 6.500v-6h5M2.500 2.500h5v6h-5z" fill="none" stroke="#fff"/></svg></div>
    <div class="line d-flex align-items-center"><span>單價：</span><span class="ms-auto me-2">出貨日：</span><span class="day">第3天</span><a href="#">詳細價格</a></div>
    <div class="acts d-flex">
      <button class="lime w-50 d-flex align-items-center justify-content-center"><svg width="11" height="12" viewBox="0 0 11 12"><path d="M2.500 9A4 4 0 015 2h1M8.500 3A4 4 0 016 10H5" fill="none" stroke="#111" stroke-width="1.500"/><path d="M5 0l3 2-3 3zM6 7v5l-3-2z" fill="#111"/></svg>更新至模型</button>
      <button class="save w-50 d-flex align-items-center justify-content-center"><svg width="11" height="11" viewBox="0 0 11 11"><path d="M1 0h8l2 2v8q0 1-1 1H1q-1 0-1-1V1q0-1 1-1z" fill="#111"/><path d="M2 2h5v2H2z" fill="#ffc800"/><circle cx="5.500" cy="7.500" r="1.700" fill="#ffc800"/></svg>連同型號儲存</button>
    </div>
  </div>
</section>

<div class="tip position-absolute d-flex align-items-center justify-content-center">
  <svg width="70" height="18" viewBox="0 0 70 18"><path d="M70 1L1 9l69 8" fill="#f5f5f5" stroke="#c6c6c6"/></svg>
  <span>匯入型號「 ATP30XL025-B-H10 」</span>
</div>
</div>
<script>
const r = a => [10 + 147 * Math.cos(a), 266 * Math.sin(a)];
let out = '';
for (let k = 0; k < 34; k++) {
  const s = 2 * Math.PI / 34, a = k * s, [x1, y1] = r(a), [x2, y2] = r(a + s * .55), [x3, y3] = r(a + s * .78);
  if (x1 > 40) continue;
  out += `<path d="M${x1} ${y1}L${x2} ${y2}h90L${x1 + 90} ${y1}z" fill="#83869b"/><path d="M${x3} ${y3}h90" stroke="#8b8ea5" stroke-width="4"/>`;
}
document.getElementById('teeth').innerHTML = out;
</script>
</body>
</html>
